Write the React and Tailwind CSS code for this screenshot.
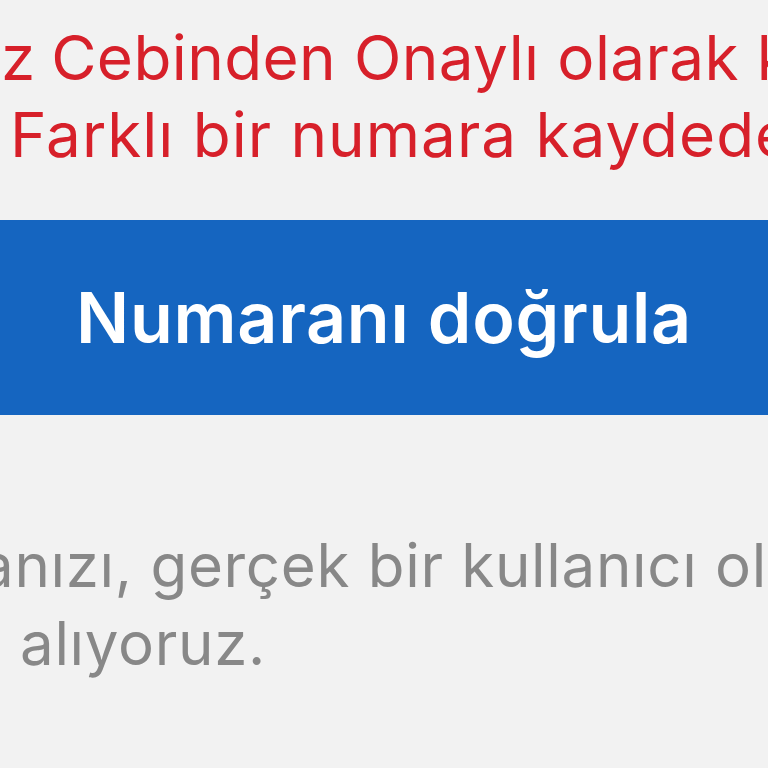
export default function App() {
  const font = { fontFamily: 'Inter, "Noto Sans", sans-serif' };
  return (
    <div className="w-[768px] h-[768px] overflow-hidden bg-[#f2f2f2]" style={font}>
      <div className="pt-[19px] text-[62px] leading-[77px] text-[#d7202a] whitespace-nowrap">
        <div className="-ml-[36px] tracking-[0.4px]">
          uz<span className="tracking-[-2px]"> </span>Cebinden Onaylı olarak kayıtlı
        </div>
        <div className="ml-[10px] tracking-[1px]">Farklı bir numara kaydedemezsiniz</div>
      </div>
      <button className="mt-[47px] w-full h-[195px] bg-[#1565c0] flex items-center justify-center">
        <span className="text-[70px] leading-[70px] font-semibold tracking-[0.7px] text-white whitespace-nowrap">
          Numaranı doğrula
        </span>
      </button>
      <div className="mt-[111px] text-[60px] leading-[78px] tracking-[0.7px] text-[#888888] whitespace-nowrap">
        <div className="-ml-[20px]">anızı, gerçek bir kullanıcı olduğunuzu</div>
        <div className="ml-[20px]">alıyoruz.</div>
      </div>
    </div>
  );
}
